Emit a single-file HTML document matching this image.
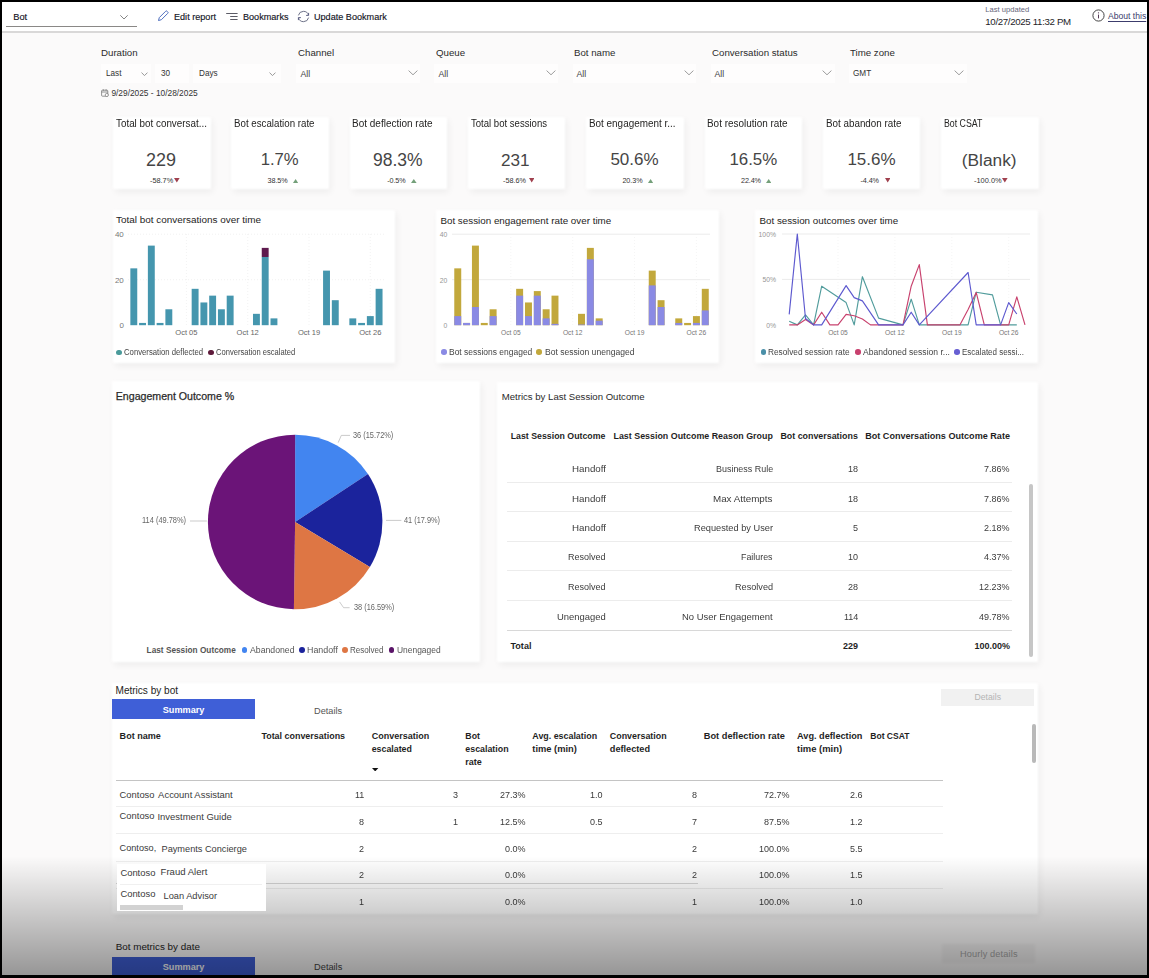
<!DOCTYPE html>
<html>
<head>
<meta charset="utf-8">
<title>Bot dashboard</title>
<style>
*{box-sizing:border-box;margin:0;padding:0}
html,body{width:1149px;height:978px;overflow:hidden;background:#000}
body{font-family:"Liberation Sans",sans-serif;color:#252423;position:relative}
.a{position:absolute;white-space:nowrap}
#page{position:absolute;left:0;top:0;width:1149px;height:978px;background:#fbfafa;overflow:hidden}
#hdr{position:absolute;left:0;top:0;width:1149px;height:31px;background:#fff}
#hdrline{position:absolute;left:0;top:31px;width:1149px;height:2px;background:#d9d8d8}
.ht{font-size:9.1px;color:#15151f;top:10.7px;-webkit-text-stroke:0.15px #15151f;line-height:12px}
.fl{font-size:9.7px;color:#2b2b2b;line-height:12px;top:47px}
.fv{font-size:8.2px;color:#333;line-height:10px;top:68.6px}
.fbox{position:absolute;top:64px;height:18.5px;background:#fefdfd;filter:blur(0.7px)}
.card{position:absolute;background:#fff;box-shadow:1.5px 3px 7px rgba(0,0,0,.06);filter:blur(1.1px)}
.kt{font-size:9.8px;color:#252423;line-height:12px;top:118px}
.kv{font-size:18.5px;color:#333;line-height:22px;top:148px;text-align:center;width:98px}
.ks{font-size:7.5px;color:#333;line-height:9px;top:176px;text-align:center;width:98px}
.ct{font-size:10px;color:#252423;line-height:12px}
.ax{font-size:7.5px;fill:#777;font-family:"Liberation Sans",sans-serif}
.lg{font-size:8px;color:#444;line-height:10px}
</style>
</head>
<body>
<div id="page">
<!-- HEADER -->
<div id="hdr"></div>
<div id="hdrline"></div>
<div class="a ht" style="left:13.2px;font-size:9.3px">Bot</div>
<div class="a" style="left:6px;top:26px;width:131px;height:1px;background:#8a8886"></div>
<svg class="a" style="left:118.6px;top:13.6px" width="10" height="7" viewBox="0 0 10 7"><path d="M1.3 1.3 L5 5 L8.7 1.3" fill="none" stroke="#777" stroke-width="0.9"/></svg>
<svg class="a" style="left:157px;top:10px" width="12" height="12" viewBox="0 0 12 12"><path d="M1.5 10.5 L2.3 7.6 L8.6 1.3 a1 1 0 0 1 1.5 0 l.6 .6 a1 1 0 0 1 0 1.5 L4.4 9.7 Z" fill="none" stroke="#3b5fb8" stroke-width="0.9"/></svg>
<div class="a ht" style="left:174px">Edit report</div>
<svg class="a" style="left:226.4px;top:12px" width="12" height="9" viewBox="0 0 12 9"><path d="M0.2 1.5H11.6M4.2 4.5H11.6M4.2 7.5H11.6" stroke="#4a4a55" stroke-width="0.9"/></svg>
<div class="a ht" style="left:243px">Bookmarks</div>
<svg class="a" style="left:296.9px;top:9.9px" width="13" height="13" viewBox="0 0 13 13"><path d="M1.4 5.4 A5.2 5.2 0 0 1 11.5 5.2 M11.6 7.6 A5.2 5.2 0 0 1 1.5 7.8" fill="none" stroke="#666a82" stroke-width="0.95"/><path d="M11.6 2.9 V5.4 H9.1 M1.4 10.1 V7.6 H3.9" fill="none" stroke="#565a80" stroke-width="0.95"/></svg>
<div class="a ht" style="left:314px">Update Bookmark</div>
<div class="a" style="left:985.3px;top:5px;font-size:7.6px;line-height:10px;color:#66667a;">Last updated</div>
<div class="a" style="left:985.3px;top:15.3px;font-size:9.69px;line-height:13px;color:#1d1d28;letter-spacing:-0.33px;">10/27/2025 11:32 PM</div>
<svg class="a" style="left:1091.6px;top:9.2px" width="13" height="13" viewBox="0 0 13 13"><circle cx="6.5" cy="6.5" r="5.6" fill="none" stroke="#3a3a3a" stroke-width="0.95"/><path d="M6.5 5.6V9.4" stroke="#553a55" stroke-width="1"/><circle cx="6.5" cy="3.8" r="0.65" fill="#553a55"/></svg>
<div class="a" style="left:1108px;top:11px;font-size:8.6px;color:#3c3c6c;line-height:11px;text-decoration:underline;text-underline-offset:1.5px">About this</div>

<!-- FILTERS -->
<div class="a fl" style="left:101px">Duration</div>
<div class="a fl" style="left:298px">Channel</div>
<div class="a fl" style="left:436px">Queue</div>
<div class="a fl" style="left:574px">Bot name</div>
<div class="a fl" style="left:712px">Conversation status</div>
<div class="a fl" style="left:850px">Time zone</div>
<div class="fbox" style="left:101px;width:50px"></div>
<div class="fbox" style="left:155px;width:34px"></div>
<div class="fbox" style="left:193px;width:88px"></div>
<div class="fbox" style="left:296px;width:124px"></div>
<div class="fbox" style="left:434px;width:124px"></div>
<div class="fbox" style="left:572.5px;width:123px"></div>
<div class="fbox" style="left:711px;width:124px"></div>
<div class="fbox" style="left:849px;width:117.5px"></div>
<div class="a fv" style="left:106px">Last</div>
<div class="a fv" style="left:161px">30</div>
<div class="a fv" style="left:199px">Days</div>
<div class="a fv" style="left:300.5px;font-size:8.7px;top:68.8px;color:#444">All</div>
<div class="a fv" style="left:438.5px;font-size:8.7px;top:68.8px;color:#444">All</div>
<div class="a fv" style="left:576.5px;font-size:8.7px;top:68.8px;color:#444">All</div>
<div class="a fv" style="left:714.5px;font-size:8.7px;top:68.8px;color:#444">All</div>
<div class="a fv" style="left:853px">GMT</div>
<div class="a" style="left:111.4px;top:88px;font-size:8.35px;color:#333;line-height:10px">9/29/2025 - 10/28/2025</div>
<svg class="a" style="left:101px;top:88.5px" width="8" height="8" viewBox="0 0 8 8"><rect x="0.6" y="1.2" width="6.2" height="6" rx="0.8" fill="none" stroke="#777" stroke-width="0.8"/><path d="M0.6 3H6.8M2.3 0.3V1.8M5.1 0.3V1.8" stroke="#777" stroke-width="0.8"/><circle cx="5.8" cy="6" r="1.6" fill="#fbfafa" stroke="#777" stroke-width="0.7"/></svg>
<svg class="a" style="left:140.7px;top:71.7px" width="7" height="4.2" viewBox="0 0 7 4.2"><path d="M0.5 0.6 L3.5 3.6 L6.5 0.6" fill="none" stroke="#858585" stroke-width="0.85"/></svg>
<svg class="a" style="left:268.5px;top:71.7px" width="7" height="4.2" viewBox="0 0 7 4.2"><path d="M0.5 0.6 L3.5 3.6 L6.5 0.6" fill="none" stroke="#858585" stroke-width="0.85"/></svg>
<svg class="a" style="left:407.7px;top:70px" width="10" height="5.6" viewBox="0 0 10 5.6"><path d="M0.6 0.6 L5 4.8 L9.4 0.6" fill="none" stroke="#8a8a8a" stroke-width="0.85"/></svg>
<svg class="a" style="left:545.6px;top:70px" width="10" height="5.6" viewBox="0 0 10 5.6"><path d="M0.6 0.6 L5 4.8 L9.4 0.6" fill="none" stroke="#8a8a8a" stroke-width="0.85"/></svg>
<svg class="a" style="left:683.8px;top:70px" width="10" height="5.6" viewBox="0 0 10 5.6"><path d="M0.6 0.6 L5 4.8 L9.4 0.6" fill="none" stroke="#8a8a8a" stroke-width="0.85"/></svg>
<svg class="a" style="left:821.8px;top:70px" width="10" height="5.6" viewBox="0 0 10 5.6"><path d="M0.6 0.6 L5 4.8 L9.4 0.6" fill="none" stroke="#8a8a8a" stroke-width="0.85"/></svg>
<svg class="a" style="left:953.8px;top:70px" width="10" height="5.6" viewBox="0 0 10 5.6"><path d="M0.6 0.6 L5 4.8 L9.4 0.6" fill="none" stroke="#8a8a8a" stroke-width="0.85"/></svg>
<!--CHEVRONS-->
<div class="card" style="left:113.2px;top:117px;width:97.5px;height:72px"></div>
<div class="a" style="left:115.7px;top:117.3px;font-size:10px;line-height:13px;color:#252423;transform:scaleX(0.985);transform-origin:0 50%;">Total bot conversat...</div>
<div class="a" style="left:146.0px;top:148.6px;font-size:17.98px;line-height:22px;color:#454545;letter-spacing:0.01px;">229</div>
<div class="a" style="left:150.0px;top:175.8px;font-size:7.33px;line-height:10px;color:#333;letter-spacing:-0.01px;">-58.7%</div>
<svg class="a" style="left:174.4px;top:178.4px" width="5.6" height="4.6"><polygon points="0,0 5.599999999999994,0 2.799999999999997,4.599999999999994" fill="#a0404e"/></svg>
<div class="card" style="left:231.4px;top:117px;width:97.5px;height:72px"></div>
<div class="a" style="left:234.2px;top:117.3px;font-size:10px;line-height:13px;color:#252423;transform:scaleX(0.972);transform-origin:0 50%;">Bot escalation rate</div>
<div class="a" style="left:260.8px;top:148.6px;font-size:16.72px;line-height:22px;color:#454545;letter-spacing:-0.09px;">1.7%</div>
<div class="a" style="left:267.6px;top:175.8px;font-size:7.22px;line-height:10px;color:#333;letter-spacing:-0.12px;">38.5%</div>
<svg class="a" style="left:293.2px;top:179.0px" width="5.2" height="4.0"><polygon points="0,4 2.5999999999999943,0 5.199999999999989,4" fill="#74a07a"/></svg>
<div class="card" style="left:349.7px;top:117px;width:97.5px;height:72px"></div>
<div class="a" style="left:352.4px;top:117.3px;font-size:10px;line-height:13px;color:#252423;transform:scaleX(0.999);transform-origin:0 50%;">Bot deflection rate</div>
<div class="a" style="left:373.0px;top:148.6px;font-size:17.5px;line-height:22px;color:#454545;letter-spacing:-0.01px;">98.3%</div>
<div class="a" style="left:387.2px;top:175.8px;font-size:7.22px;line-height:10px;color:#333;letter-spacing:-0.11px;">-0.5%</div>
<svg class="a" style="left:411.2px;top:179.0px" width="5.6" height="4.0"><polygon points="0,4 2.8000000000000114,0 5.600000000000023,4" fill="#74a07a"/></svg>
<div class="card" style="left:467.9px;top:117px;width:97.5px;height:72px"></div>
<div class="a" style="left:471.0px;top:117.3px;font-size:10px;line-height:13px;color:#252423;transform:scaleX(0.956);transform-origin:0 50%;">Total bot sessions</div>
<div class="a" style="left:501.0px;top:148.6px;font-size:17.14px;line-height:22px;color:#454545;letter-spacing:0.01px;">231</div>
<div class="a" style="left:503.0px;top:175.8px;font-size:7.26px;line-height:10px;color:#333;">-58.6%</div>
<svg class="a" style="left:529.0px;top:178.4px" width="5.4" height="4.6"><polygon points="0,0 5.399999999999977,0 2.6999999999999886,4.599999999999994" fill="#a0404e"/></svg>
<div class="card" style="left:586.2px;top:117px;width:97.5px;height:72px"></div>
<div class="a" style="left:588.6px;top:117.3px;font-size:10px;line-height:13px;color:#252423;transform:scaleX(0.990);transform-origin:0 50%;">Bot engagement r...</div>
<div class="a" style="left:610.4px;top:148.6px;font-size:17.0px;line-height:22px;color:#454545;">50.6%</div>
<div class="a" style="left:622.4px;top:175.8px;font-size:7.22px;line-height:10px;color:#333;letter-spacing:-0.07px;">20.3%</div>
<svg class="a" style="left:648.2px;top:179.0px" width="5.2" height="4.0"><polygon points="0,4 2.599999999999966,0 5.199999999999932,4" fill="#74a07a"/></svg>
<div class="card" style="left:704.5px;top:117px;width:97.5px;height:72px"></div>
<div class="a" style="left:707.0px;top:117.3px;font-size:10px;line-height:13px;color:#252423;transform:scaleX(0.993);transform-origin:0 50%;">Bot resolution rate</div>
<div class="a" style="left:729.4px;top:148.6px;font-size:16.86px;line-height:22px;color:#454545;">16.5%</div>
<div class="a" style="left:741.0px;top:175.8px;font-size:7.22px;line-height:10px;color:#333;letter-spacing:-0.12px;">22.4%</div>
<svg class="a" style="left:766.0px;top:179.0px" width="5.4" height="4.0"><polygon points="0,4 2.6999999999999886,0 5.399999999999977,4" fill="#74a07a"/></svg>
<div class="card" style="left:822.7px;top:117px;width:97.5px;height:72px"></div>
<div class="a" style="left:825.6px;top:117.3px;font-size:10px;line-height:13px;color:#252423;transform:scaleX(0.983);transform-origin:0 50%;">Bot abandon rate</div>
<div class="a" style="left:847.4px;top:148.6px;font-size:17.0px;line-height:22px;color:#454545;">15.6%</div>
<div class="a" style="left:860.4px;top:175.8px;font-size:7.22px;line-height:10px;color:#333;letter-spacing:-0.06px;">-4.4%</div>
<svg class="a" style="left:884.6px;top:178.4px" width="5.4" height="4.6"><polygon points="0,0 5.399999999999977,0 2.6999999999999886,4.599999999999994" fill="#a0404e"/></svg>
<div class="card" style="left:941.0px;top:117px;width:97.5px;height:72px"></div>
<div class="a" style="left:943.6px;top:117.3px;font-size:10px;line-height:13px;color:#252423;transform:scaleX(0.878);transform-origin:0 50%;">Bot CSAT</div>
<div class="a" style="left:961.8px;top:148.6px;font-size:17.3px;line-height:22px;color:#454545;letter-spacing:0.01px;">(Blank)</div>
<div class="a" style="left:974.0px;top:175.8px;font-size:7.41px;line-height:10px;color:#333;">-100.0%</div>
<svg class="a" style="left:1002.4px;top:178.4px" width="5.6" height="4.6"><polygon points="0,0 5.600000000000023,0 2.8000000000000114,4.599999999999994" fill="#a0404e"/></svg>
<!--KPI-->
<div class="card" style="left:113px;top:210px;width:282px;height:153px"></div>
<div class="card" style="left:436px;top:210px;width:283px;height:153px"></div>
<div class="card" style="left:755px;top:210px;width:283px;height:153px"></div>
<div class="a" style="left:116.0px;top:213.3px;font-size:9.94px;line-height:13px;color:#252423;">Total bot conversations over time</div>
<div class="a" style="left:115.1px;top:229.2px;font-size:7.98px;line-height:11px;color:#777;letter-spacing:-0.38px;">40</div>
<div class="a" style="left:115.1px;top:274.7px;font-size:7.98px;line-height:11px;color:#777;letter-spacing:-0.38px;">20</div>
<div class="a" style="left:119.4px;top:320.2px;font-size:7.98px;line-height:11px;color:#777;letter-spacing:-0.24px;">0</div>
<svg class="a" style="left:0;top:200px" width="1149" height="170" viewBox="0 200 1149 170"><line x1="128" x2="384" y1="279.7" y2="279.7" stroke="#ebebeb" stroke-width="0.7" stroke-dasharray="1 2"/><line x1="128" x2="384" y1="234.2" y2="234.2" stroke="#ebebeb" stroke-width="0.7" stroke-dasharray="1 2"/><line x1="186.4" x2="186.4" y1="234" y2="325.2" stroke="#eeeeee" stroke-width="0.7" stroke-dasharray="1 2"/><line x1="247.7" x2="247.7" y1="234" y2="325.2" stroke="#eeeeee" stroke-width="0.7" stroke-dasharray="1 2"/><line x1="309.0" x2="309.0" y1="234" y2="325.2" stroke="#eeeeee" stroke-width="0.7" stroke-dasharray="1 2"/><line x1="370.3" x2="370.3" y1="234" y2="325.2" stroke="#eeeeee" stroke-width="0.7" stroke-dasharray="1 2"/><rect x="130.35" y="268.35" width="6.9" height="56.85" fill="#4596ae"/><rect x="139.11" y="322.93" width="6.9" height="2.27" fill="#4596ae"/><rect x="147.87" y="245.61" width="6.9" height="79.59" fill="#4596ae"/><rect x="156.63" y="322.93" width="6.9" height="2.27" fill="#4596ae"/><rect x="165.39" y="309.28" width="6.9" height="15.92" fill="#4596ae"/><rect x="191.67" y="288.82" width="6.9" height="36.38" fill="#4596ae"/><rect x="200.43" y="302.46" width="6.9" height="22.74" fill="#4596ae"/><rect x="209.19" y="295.64" width="6.9" height="29.56" fill="#4596ae"/><rect x="217.95" y="309.28" width="6.9" height="15.92" fill="#4596ae"/><rect x="226.71" y="295.64" width="6.9" height="29.56" fill="#4596ae"/><rect x="252.99" y="313.83" width="6.9" height="11.37" fill="#4596ae"/><rect x="261.75" y="256.98" width="6.9" height="68.22" fill="#4596ae"/><rect x="261.75" y="247.88" width="6.9" height="9.10" fill="#5e1a4e"/><rect x="270.51" y="318.38" width="6.9" height="6.82" fill="#4596ae"/><rect x="323.07" y="270.62" width="6.9" height="54.58" fill="#4596ae"/><rect x="331.83" y="300.19" width="6.9" height="25.01" fill="#4596ae"/><rect x="349.35" y="318.38" width="6.9" height="6.82" fill="#4596ae"/><rect x="358.11" y="322.93" width="6.9" height="2.27" fill="#4596ae"/><rect x="366.87" y="316.10" width="6.9" height="9.10" fill="#4596ae"/><rect x="375.63" y="288.82" width="6.9" height="36.38" fill="#4596ae"/><line x1="452" x2="710" y1="279.7" y2="279.7" stroke="#e6e6e6" stroke-width="0.8"/><line x1="452" x2="710" y1="234.2" y2="234.2" stroke="#e6e6e6" stroke-width="0.8"/><line x1="510.8" x2="510.8" y1="234" y2="325.2" stroke="#f1f1f1" stroke-width="0.7" stroke-dasharray="1 2"/><line x1="572.7" x2="572.7" y1="234" y2="325.2" stroke="#f1f1f1" stroke-width="0.7" stroke-dasharray="1 2"/><line x1="634.5" x2="634.5" y1="234" y2="325.2" stroke="#f1f1f1" stroke-width="0.7" stroke-dasharray="1 2"/><line x1="696.4" x2="696.4" y1="234" y2="325.2" stroke="#f1f1f1" stroke-width="0.7" stroke-dasharray="1 2"/><rect x="454.27" y="268.35" width="6.96" height="56.85" fill="#c2a83c"/><rect x="454.27" y="316.10" width="6.96" height="9.10" fill="#8a8ae4"/><rect x="463.11" y="322.93" width="6.96" height="2.27" fill="#c2a83c"/><rect x="463.11" y="322.93" width="6.96" height="2.27" fill="#8a8ae4"/><rect x="471.95" y="245.61" width="6.96" height="79.59" fill="#c2a83c"/><rect x="471.95" y="307.01" width="6.96" height="18.19" fill="#8a8ae4"/><rect x="480.79" y="322.93" width="6.96" height="2.27" fill="#c2a83c"/><rect x="489.63" y="309.28" width="6.96" height="15.92" fill="#c2a83c"/><rect x="489.63" y="316.10" width="6.96" height="9.10" fill="#8a8ae4"/><rect x="516.15" y="288.82" width="6.96" height="36.38" fill="#c2a83c"/><rect x="516.15" y="295.64" width="6.96" height="29.56" fill="#8a8ae4"/><rect x="524.99" y="302.46" width="6.96" height="22.74" fill="#c2a83c"/><rect x="524.99" y="316.10" width="6.96" height="9.10" fill="#8a8ae4"/><rect x="533.83" y="291.09" width="6.96" height="34.11" fill="#c2a83c"/><rect x="533.83" y="295.64" width="6.96" height="29.56" fill="#8a8ae4"/><rect x="542.67" y="309.28" width="6.96" height="15.92" fill="#c2a83c"/><rect x="542.67" y="318.38" width="6.96" height="6.82" fill="#8a8ae4"/><rect x="551.51" y="295.64" width="6.96" height="29.56" fill="#c2a83c"/><rect x="551.51" y="323.84" width="6.96" height="1.36" fill="#8a8ae4"/><rect x="578.03" y="313.83" width="6.96" height="11.37" fill="#c2a83c"/><rect x="578.03" y="324.52" width="6.96" height="0.68" fill="#8a8ae4"/><rect x="586.87" y="247.88" width="6.96" height="77.32" fill="#c2a83c"/><rect x="586.87" y="259.25" width="6.96" height="65.95" fill="#8a8ae4"/><rect x="595.71" y="318.38" width="6.96" height="6.82" fill="#c2a83c"/><rect x="595.71" y="320.65" width="6.96" height="4.55" fill="#8a8ae4"/><rect x="648.75" y="270.62" width="6.96" height="54.58" fill="#c2a83c"/><rect x="648.75" y="285.40" width="6.96" height="39.80" fill="#8a8ae4"/><rect x="657.59" y="300.19" width="6.96" height="25.01" fill="#c2a83c"/><rect x="657.59" y="307.01" width="6.96" height="18.19" fill="#8a8ae4"/><rect x="675.27" y="318.38" width="6.96" height="6.82" fill="#c2a83c"/><rect x="675.27" y="322.93" width="6.96" height="2.27" fill="#8a8ae4"/><rect x="684.11" y="322.93" width="6.96" height="2.27" fill="#c2a83c"/><rect x="692.95" y="316.10" width="6.96" height="9.10" fill="#c2a83c"/><rect x="692.95" y="322.93" width="6.96" height="2.27" fill="#8a8ae4"/><rect x="701.79" y="288.82" width="6.96" height="36.38" fill="#c2a83c"/><rect x="701.79" y="310.42" width="6.96" height="14.78" fill="#8a8ae4"/><line x1="782" x2="1030" y1="279.4" y2="279.4" stroke="#e6e6e6" stroke-width="0.8"/><line x1="782" x2="1030" y1="234.0" y2="234.0" stroke="#e6e6e6" stroke-width="0.8"/><line x1="838.0" x2="838.0" y1="234" y2="324.9" stroke="#f1f1f1" stroke-width="0.7" stroke-dasharray="1 2"/><line x1="894.9" x2="894.9" y1="234" y2="324.9" stroke="#f1f1f1" stroke-width="0.7" stroke-dasharray="1 2"/><line x1="951.8" x2="951.8" y1="234" y2="324.9" stroke="#f1f1f1" stroke-width="0.7" stroke-dasharray="1 2"/><line x1="1008.7" x2="1008.7" y1="234" y2="324.9" stroke="#f1f1f1" stroke-width="0.7" stroke-dasharray="1 2"/><polyline points="789.2,321.3 797.3,324.9 805.5,314.9 813.6,324.9 821.7,286.2 846.1,302.6 854.2,324.9 862.4,276.7 878.6,318.1 903.0,324.9 911.2,299.2 919.3,324.9 968.1,324.9 976.2,292.2 992.5,294.9 1000.6,324.9 1016.8,324.9" fill="none" stroke="#519c9c" stroke-width="1.15" stroke-linejoin="round"/><polyline points="789.2,324.9 797.3,324.9 805.5,319.4 813.6,324.9 821.7,312.2 829.9,324.9 838.0,324.9 846.1,314.4 854.2,315.8 862.4,319.0 870.5,324.9 903.0,324.9 911.2,286.2 919.3,264.6 927.4,324.9 959.9,324.9 968.1,309.4 976.2,292.4 984.3,324.9 1008.7,324.9 1016.8,296.9 1025.0,324.9" fill="none" stroke="#c8426e" stroke-width="1.15" stroke-linejoin="round"/><polyline points="789.2,314.4 797.3,234.0 805.5,318.5 813.6,324.9 821.7,324.9 846.1,285.6 854.2,297.6 862.4,300.9 878.6,324.9 903.0,324.9 911.2,312.2 919.3,324.9 968.1,272.5 976.2,324.9 1000.6,324.9 1008.7,302.6 1016.8,314.0" fill="none" stroke="#5d59cf" stroke-width="1.15" stroke-linejoin="round"/></svg>
<div class="a" style="left:175.3px;top:328.0px;font-size:7.54px;line-height:10px;color:#666;">Oct 05</div>
<div class="a" style="left:236.6px;top:328.0px;font-size:7.54px;line-height:10px;color:#666;">Oct 12</div>
<div class="a" style="left:297.9px;top:328.0px;font-size:7.54px;line-height:10px;color:#666;">Oct 19</div>
<div class="a" style="left:359.2px;top:328.0px;font-size:7.54px;line-height:10px;color:#666;">Oct 26</div>
<div class="a" style="left:116.2px;top:349.5px;width:5.6px;height:5.6px;border-radius:50%;background:#4a9a9a"></div>
<div class="a" style="left:123.9px;top:346.8px;font-size:8.4px;line-height:11px;color:#444;transform:scaleX(0.923);transform-origin:0 50%;">Conversation deflected</div>
<div class="a" style="left:208.2px;top:349.5px;width:5.6px;height:5.6px;border-radius:50%;background:#5e1a3a"></div>
<div class="a" style="left:215.5px;top:346.8px;font-size:8.4px;line-height:11px;color:#444;transform:scaleX(0.905);transform-origin:0 50%;">Conversation escalated</div>
<div class="a" style="left:440.4px;top:213.8px;font-size:9.81px;line-height:13px;color:#252423;letter-spacing:0.01px;">Bot session engagement rate over time</div>
<div class="a" style="left:439.8px;top:230.1px;font-size:6.8px;line-height:9px;color:#969696;">40</div>
<div class="a" style="left:439.8px;top:275.6px;font-size:6.8px;line-height:9px;color:#969696;">20</div>
<div class="a" style="left:443.6px;top:321.1px;font-size:6.8px;line-height:9px;color:#969696;">0</div>
<div class="a" style="left:501.0px;top:328.1px;font-size:6.66px;line-height:9px;color:#777;">Oct 05</div>
<div class="a" style="left:562.9px;top:328.1px;font-size:6.66px;line-height:9px;color:#777;">Oct 12</div>
<div class="a" style="left:624.8px;top:328.1px;font-size:6.66px;line-height:9px;color:#777;">Oct 19</div>
<div class="a" style="left:686.6px;top:328.1px;font-size:6.66px;line-height:9px;color:#777;">Oct 26</div>
<div class="a" style="left:441.2px;top:349.4px;width:5.6px;height:5.6px;border-radius:50%;background:#8a8ae4"></div>
<div class="a" style="left:448.7px;top:346.7px;font-size:8.4px;line-height:11px;color:#444;transform:scaleX(1.011);transform-origin:0 50%;">Bot sessions engaged</div>
<div class="a" style="left:536.4px;top:349.4px;width:5.6px;height:5.6px;border-radius:50%;background:#c2a83c"></div>
<div class="a" style="left:544.5px;top:346.7px;font-size:8.4px;line-height:11px;color:#444;transform:scaleX(1.022);transform-origin:0 50%;">Bot session unengaged</div>
<div class="a" style="left:759.5px;top:213.8px;font-size:9.79px;line-height:13px;color:#252423;">Bot session outcomes over time</div>
<div class="a" style="left:758.6px;top:229.9px;font-size:6.8px;line-height:9px;color:#969696;">100%</div>
<div class="a" style="left:762.4px;top:275.3px;font-size:6.8px;line-height:9px;color:#969696;">50%</div>
<div class="a" style="left:766.2px;top:320.8px;font-size:6.8px;line-height:9px;color:#969696;">0%</div>
<div class="a" style="left:828.2px;top:328.1px;font-size:6.66px;line-height:9px;color:#777;">Oct 05</div>
<div class="a" style="left:885.1px;top:328.1px;font-size:6.66px;line-height:9px;color:#777;">Oct 12</div>
<div class="a" style="left:942.0px;top:328.1px;font-size:6.66px;line-height:9px;color:#777;">Oct 19</div>
<div class="a" style="left:998.9px;top:328.1px;font-size:6.66px;line-height:9px;color:#777;">Oct 26</div>
<div class="a" style="left:760.9px;top:349.4px;width:5.6px;height:5.6px;border-radius:50%;background:#4a8fa8"></div>
<div class="a" style="left:768.4px;top:346.7px;font-size:8.4px;line-height:11px;color:#444;transform:scaleX(0.990);transform-origin:0 50%;">Resolved session rate</div>
<div class="a" style="left:855.0px;top:349.4px;width:5.6px;height:5.6px;border-radius:50%;background:#c8406e"></div>
<div class="a" style="left:862.6px;top:346.7px;font-size:8.4px;line-height:11px;color:#444;transform:scaleX(1.020);transform-origin:0 50%;">Abandoned session r...</div>
<div class="a" style="left:954.0px;top:349.4px;width:5.6px;height:5.6px;border-radius:50%;background:#675fd2"></div>
<div class="a" style="left:962.0px;top:346.7px;font-size:8.4px;line-height:11px;color:#444;transform:scaleX(0.951);transform-origin:0 50%;">Escalated sessi...</div>
<!--CHARTS-->
<div class="card" style="left:112px;top:381px;width:368px;height:281px"></div>
<div class="a" style="left:115.8px;top:389.4px;font-size:10.61px;line-height:14px;color:#2b2b2b;letter-spacing:-0.01px;-webkit-text-stroke:0.25px #2b2b2b;">Engagement Outcome %</div>
<svg class="a" style="left:130px;top:425px" width="330" height="195" viewBox="130 425 330 195"><path d="M295.1 522.0 L295.10 434.70 A87.3 87.3 0 0 1 367.98 473.94 Z" fill="#4285f0"/><path d="M295.1 522.0 L367.98 473.94 A87.3 87.3 0 0 1 369.89 567.03 Z" fill="#1b239c"/><path d="M295.1 522.0 L369.89 567.03 A87.3 87.3 0 0 1 293.90 609.29 Z" fill="#de7644"/><path d="M295.1 522.0 L293.90 609.29 A87.3 87.3 0 0 1 295.10 434.70 Z" fill="#6b1478"/><polyline points="338.2,442.6 341.3,435.4 350,435.4" stroke="#b5b5b5" stroke-width="0.7" fill="none"/><polyline points="386,520.4 401.4,520.4" stroke="#b5b5b5" stroke-width="0.7" fill="none"/><polyline points="339.6,601.9 343.6,607.7 349.6,607.7" stroke="#b5b5b5" stroke-width="0.7" fill="none"/><polyline points="190,521 206.9,521" stroke="#b5b5b5" stroke-width="0.7" fill="none"/></svg>
<div class="a" style="left:352.7px;top:430.2px;font-size:8.2px;line-height:11px;color:#666;transform:scaleX(0.903);transform-origin:0 50%;">36 (15.72%)</div>
<div class="a" style="left:404.0px;top:514.9px;font-size:8.2px;line-height:11px;color:#666;transform:scaleX(0.899);transform-origin:0 50%;">41 (17.9%)</div>
<div class="a" style="left:353.7px;top:602.4px;font-size:8.2px;line-height:11px;color:#666;transform:scaleX(0.901);transform-origin:0 50%;">38 (16.59%)</div>
<div class="a" style="left:142.1px;top:515.4px;font-size:8.2px;line-height:11px;color:#666;transform:scaleX(0.908);transform-origin:0 50%;">114 (49.78%)</div>
<div class="a" style="left:146.6px;top:644.6px;font-size:8.26px;line-height:11px;color:#555;letter-spacing:0.01px;font-weight:700;">Last Session Outcome</div>
<div class="a" style="left:241.7px;top:647.1px;width:5.8px;height:5.8px;border-radius:50%;background:#4285f0"></div>
<div class="a" style="left:249.8px;top:644.6px;font-size:8.7px;line-height:11px;color:#555;transform:scaleX(1.001);transform-origin:0 50%;">Abandoned</div>
<div class="a" style="left:298.8px;top:647.1px;width:5.8px;height:5.8px;border-radius:50%;background:#1b239c"></div>
<div class="a" style="left:307.0px;top:644.6px;font-size:8.7px;line-height:11px;color:#555;transform:scaleX(1.020);transform-origin:0 50%;">Handoff</div>
<div class="a" style="left:342.2px;top:647.1px;width:5.8px;height:5.8px;border-radius:50%;background:#de7644"></div>
<div class="a" style="left:350.3px;top:644.6px;font-size:8.7px;line-height:11px;color:#555;transform:scaleX(0.925);transform-origin:0 50%;">Resolved</div>
<div class="a" style="left:388.6px;top:647.1px;width:5.8px;height:5.8px;border-radius:50%;background:#5a1468"></div>
<div class="a" style="left:397.2px;top:644.6px;font-size:8.7px;line-height:11px;color:#555;transform:scaleX(0.970);transform-origin:0 50%;">Unengaged</div>
<!--PIE-->
<div class="card" style="left:497px;top:382px;width:541px;height:280px"></div>
<div class="a" style="left:501.7px;top:390.1px;font-size:9.61px;line-height:13px;color:#2a2a2a;">Metrics by Last Session Outcome</div>
<div class="a" style="left:510.7px;top:430.0px;font-size:8.78px;line-height:12px;color:#1f1f1f;letter-spacing:0.01px;font-weight:700;">Last Session Outcome</div>
<div class="a" style="left:613.5px;top:430.0px;font-size:8.87px;line-height:12px;color:#1f1f1f;letter-spacing:0.01px;font-weight:700;">Last Session Outcome Reason Group</div>
<div class="a" style="left:780.4px;top:430.0px;font-size:8.88px;line-height:12px;color:#1f1f1f;font-weight:700;">Bot conversations</div>
<div class="a" style="left:865.2px;top:430.0px;font-size:9.08px;line-height:12px;color:#1f1f1f;font-weight:700;">Bot Conversations Outcome Rate</div>
<div class="a" style="left:571.6px;top:462.0px;font-size:9.8px;line-height:13px;color:#3c3c3c;transform:scaleX(0.996);transform-origin:0 50%;">Handoff</div>
<div class="a" style="left:715.6px;top:462.0px;font-size:9.8px;line-height:13px;color:#3c3c3c;transform:scaleX(0.912);transform-origin:0 50%;">Business Rule</div>
<div class="a" style="left:847.9px;top:462.0px;font-size:9.8px;line-height:13px;color:#3c3c3c;transform:scaleX(0.920);transform-origin:0 50%;">18</div>
<div class="a" style="left:984.4px;top:462.0px;font-size:9.8px;line-height:13px;color:#3c3c3c;transform:scaleX(0.920);transform-origin:0 50%;">7.86%</div>
<div class="a" style="left:571.6px;top:491.5px;font-size:9.8px;line-height:13px;color:#3c3c3c;transform:scaleX(0.996);transform-origin:0 50%;">Handoff</div>
<div class="a" style="left:713.3px;top:491.5px;font-size:9.8px;line-height:13px;color:#3c3c3c;transform:scaleX(1.001);transform-origin:0 50%;">Max Attempts</div>
<div class="a" style="left:847.9px;top:491.5px;font-size:9.8px;line-height:13px;color:#3c3c3c;transform:scaleX(0.920);transform-origin:0 50%;">18</div>
<div class="a" style="left:984.4px;top:491.5px;font-size:9.8px;line-height:13px;color:#3c3c3c;transform:scaleX(0.920);transform-origin:0 50%;">7.86%</div>
<div class="a" style="left:571.6px;top:520.5px;font-size:9.8px;line-height:13px;color:#3c3c3c;transform:scaleX(0.996);transform-origin:0 50%;">Handoff</div>
<div class="a" style="left:693.7px;top:520.5px;font-size:9.8px;line-height:13px;color:#3c3c3c;transform:scaleX(0.942);transform-origin:0 50%;">Requested by User</div>
<div class="a" style="left:852.9px;top:520.5px;font-size:9.8px;line-height:13px;color:#3c3c3c;transform:scaleX(0.920);transform-origin:0 50%;">5</div>
<div class="a" style="left:984.4px;top:520.5px;font-size:9.8px;line-height:13px;color:#3c3c3c;transform:scaleX(0.920);transform-origin:0 50%;">2.18%</div>
<div class="a" style="left:568.0px;top:550.1px;font-size:9.8px;line-height:13px;color:#3c3c3c;transform:scaleX(0.921);transform-origin:0 50%;">Resolved</div>
<div class="a" style="left:741.2px;top:550.1px;font-size:9.8px;line-height:13px;color:#3c3c3c;transform:scaleX(0.904);transform-origin:0 50%;">Failures</div>
<div class="a" style="left:847.9px;top:550.1px;font-size:9.8px;line-height:13px;color:#3c3c3c;transform:scaleX(0.920);transform-origin:0 50%;">10</div>
<div class="a" style="left:984.4px;top:550.1px;font-size:9.8px;line-height:13px;color:#3c3c3c;transform:scaleX(0.920);transform-origin:0 50%;">4.37%</div>
<div class="a" style="left:568.0px;top:579.7px;font-size:9.8px;line-height:13px;color:#3c3c3c;transform:scaleX(0.921);transform-origin:0 50%;">Resolved</div>
<div class="a" style="left:734.6px;top:579.7px;font-size:9.8px;line-height:13px;color:#3c3c3c;transform:scaleX(0.933);transform-origin:0 50%;">Resolved</div>
<div class="a" style="left:847.9px;top:579.7px;font-size:9.8px;line-height:13px;color:#3c3c3c;transform:scaleX(0.920);transform-origin:0 50%;">28</div>
<div class="a" style="left:979.4px;top:579.7px;font-size:9.8px;line-height:13px;color:#3c3c3c;transform:scaleX(0.920);transform-origin:0 50%;">12.23%</div>
<div class="a" style="left:556.8px;top:609.7px;font-size:9.8px;line-height:13px;color:#3c3c3c;transform:scaleX(0.963);transform-origin:0 50%;">Unengaged</div>
<div class="a" style="left:682.0px;top:609.7px;font-size:9.8px;line-height:13px;color:#3c3c3c;transform:scaleX(0.963);transform-origin:0 50%;">No User Engagement</div>
<div class="a" style="left:843.5px;top:609.7px;font-size:9.8px;line-height:13px;color:#3c3c3c;transform:scaleX(0.920);transform-origin:0 50%;">114</div>
<div class="a" style="left:979.4px;top:609.7px;font-size:9.8px;line-height:13px;color:#3c3c3c;transform:scaleX(0.920);transform-origin:0 50%;">49.78%</div>
<div class="a" style="left:507px;top:481.8px;width:504.5px;height:1px;background:#ececec"></div>
<div class="a" style="left:507px;top:511.2px;width:504.5px;height:1px;background:#ececec"></div>
<div class="a" style="left:507px;top:540.5px;width:504.5px;height:1px;background:#ececec"></div>
<div class="a" style="left:507px;top:570.3px;width:504.5px;height:1px;background:#ececec"></div>
<div class="a" style="left:507px;top:600.1px;width:504.5px;height:1px;background:#ececec"></div>
<div class="a" style="left:507px;top:629.5px;width:504.5px;height:1px;background:#d8d8d8"></div>
<div class="a" style="left:510.5px;top:639.6px;font-size:9.02px;line-height:12px;color:#1f1f1f;letter-spacing:0.01px;font-weight:700;">Total</div>
<div class="a" style="left:842.9px;top:639.6px;font-size:9.0px;line-height:12px;color:#1f1f1f;font-weight:700;">229</div>
<div class="a" style="left:974.5px;top:639.6px;font-size:9.0px;line-height:12px;color:#1f1f1f;font-weight:700;">100.00%</div>
<div class="a" style="left:1028.5px;top:484px;width:4px;height:173px;background:#c6c6c6;border-radius:2px"></div>
<!--TABLE1-->
<div class="card" style="left:112px;top:683px;width:926px;height:230.5px"></div>
<div class="a" style="left:115.5px;top:683.9px;font-size:10.08px;line-height:13px;color:#252423;letter-spacing:-0.01px;">Metrics by bot</div>
<div class="a" style="left:111.8px;top:699.1px;width:143.3px;height:20px;background:#3f5fd7"></div>
<div class="a" style="left:162.7px;top:704.4px;font-size:9.15px;line-height:12px;color:#fff;letter-spacing:0.02px;font-weight:700;">Summary</div>
<div class="a" style="left:314.0px;top:704.6px;font-size:9.2px;line-height:12px;color:#555;">Details</div>
<div class="a" style="left:940.8px;top:688.6px;width:93.2px;height:17px;background:#f1f1f1"></div>
<div class="a" style="left:974.5px;top:691.7px;font-size:8.67px;line-height:11px;color:#b4b4b4;letter-spacing:0.01px;">Details</div>
<div class="a" style="left:119.6px;top:729.8px;font-size:9.04px;line-height:12px;color:#1f1f1f;letter-spacing:0.01px;font-weight:700;">Bot name</div>
<div class="a" style="left:261.4px;top:729.8px;font-size:8.92px;line-height:12px;color:#1f1f1f;letter-spacing:0.01px;font-weight:700;">Total conversations</div>
<div class="a" style="left:371.7px;top:729.8px;font-size:9.0px;line-height:12px;color:#1f1f1f;font-weight:700;">Conversation</div>
<div class="a" style="left:371.7px;top:743.1px;font-size:8.82px;line-height:12px;color:#1f1f1f;font-weight:700;">escalated</div>
<svg class="a" style="left:372.2px;top:767.8px" width="6.4" height="3.4"><polygon points="0,0 6.4,0 3.2,3.4" fill="#111"/></svg>
<div class="a" style="left:465.3px;top:729.8px;font-size:8.76px;line-height:12px;color:#1f1f1f;letter-spacing:0.01px;font-weight:700;">Bot</div>
<div class="a" style="left:465.3px;top:743.1px;font-size:8.85px;line-height:12px;color:#1f1f1f;font-weight:700;">escalation</div>
<div class="a" style="left:465.3px;top:756.3px;font-size:8.99px;line-height:12px;color:#1f1f1f;letter-spacing:0.01px;font-weight:700;">rate</div>
<div class="a" style="left:532.3px;top:729.8px;font-size:8.88px;line-height:12px;color:#1f1f1f;font-weight:700;">Avg. escalation</div>
<div class="a" style="left:532.3px;top:743.1px;font-size:9.33px;line-height:12px;color:#1f1f1f;font-weight:700;">time (min)</div>
<div class="a" style="left:609.8px;top:729.8px;font-size:8.89px;line-height:12px;color:#1f1f1f;letter-spacing:0.01px;font-weight:700;">Conversation</div>
<div class="a" style="left:609.8px;top:743.1px;font-size:9.18px;line-height:12px;color:#1f1f1f;font-weight:700;">deflected</div>
<div class="a" style="left:703.8px;top:729.8px;font-size:9.24px;line-height:12px;color:#1f1f1f;font-weight:700;">Bot deflection rate</div>
<div class="a" style="left:797.0px;top:729.8px;font-size:9.17px;line-height:12px;color:#1f1f1f;letter-spacing:0.01px;font-weight:700;">Avg. deflection</div>
<div class="a" style="left:797.0px;top:743.1px;font-size:9.42px;line-height:12px;color:#1f1f1f;letter-spacing:0.01px;font-weight:700;">time (min)</div>
<div class="a" style="left:870.3px;top:729.8px;font-size:8.55px;line-height:12px;color:#1f1f1f;letter-spacing:-0.02px;font-weight:700;">Bot CSAT</div>
<div class="a" style="left:116.0px;top:779.9px;width:827.0px;height:1px;background:#c4c4c4;"></div>
<div class="a" style="left:354.8px;top:787.9px;font-size:9.8px;line-height:13px;color:#3a3a3a;transform:scaleX(0.920);transform-origin:0 50%;">11</div>
<div class="a" style="left:452.8px;top:787.9px;font-size:9.8px;line-height:13px;color:#3a3a3a;transform:scaleX(0.920);transform-origin:0 50%;">3</div>
<div class="a" style="left:499.6px;top:787.9px;font-size:9.8px;line-height:13px;color:#3a3a3a;transform:scaleX(0.920);transform-origin:0 50%;">27.3%</div>
<div class="a" style="left:590.3px;top:787.9px;font-size:9.8px;line-height:13px;color:#3a3a3a;transform:scaleX(0.920);transform-origin:0 50%;">1.0</div>
<div class="a" style="left:691.7px;top:787.9px;font-size:9.8px;line-height:13px;color:#3a3a3a;transform:scaleX(0.920);transform-origin:0 50%;">8</div>
<div class="a" style="left:764.4px;top:787.9px;font-size:9.8px;line-height:13px;color:#3a3a3a;transform:scaleX(0.920);transform-origin:0 50%;">72.7%</div>
<div class="a" style="left:850.3px;top:787.9px;font-size:9.8px;line-height:13px;color:#3a3a3a;transform:scaleX(0.920);transform-origin:0 50%;">2.6</div>
<div class="a" style="left:359.2px;top:814.8px;font-size:9.8px;line-height:13px;color:#3a3a3a;transform:scaleX(0.920);transform-origin:0 50%;">8</div>
<div class="a" style="left:452.8px;top:814.8px;font-size:9.8px;line-height:13px;color:#3a3a3a;transform:scaleX(0.920);transform-origin:0 50%;">1</div>
<div class="a" style="left:499.6px;top:814.8px;font-size:9.8px;line-height:13px;color:#3a3a3a;transform:scaleX(0.920);transform-origin:0 50%;">12.5%</div>
<div class="a" style="left:590.3px;top:814.8px;font-size:9.8px;line-height:13px;color:#3a3a3a;transform:scaleX(0.920);transform-origin:0 50%;">0.5</div>
<div class="a" style="left:691.7px;top:814.8px;font-size:9.8px;line-height:13px;color:#3a3a3a;transform:scaleX(0.920);transform-origin:0 50%;">7</div>
<div class="a" style="left:764.4px;top:814.8px;font-size:9.8px;line-height:13px;color:#3a3a3a;transform:scaleX(0.920);transform-origin:0 50%;">87.5%</div>
<div class="a" style="left:850.3px;top:814.8px;font-size:9.8px;line-height:13px;color:#3a3a3a;transform:scaleX(0.920);transform-origin:0 50%;">1.2</div>
<div class="a" style="left:359.2px;top:842.1px;font-size:9.8px;line-height:13px;color:#3a3a3a;transform:scaleX(0.920);transform-origin:0 50%;">2</div>
<div class="a" style="left:504.6px;top:842.1px;font-size:9.8px;line-height:13px;color:#3a3a3a;transform:scaleX(0.920);transform-origin:0 50%;">0.0%</div>
<div class="a" style="left:691.7px;top:842.1px;font-size:9.8px;line-height:13px;color:#3a3a3a;transform:scaleX(0.920);transform-origin:0 50%;">2</div>
<div class="a" style="left:759.4px;top:842.1px;font-size:9.8px;line-height:13px;color:#3a3a3a;transform:scaleX(0.920);transform-origin:0 50%;">100.0%</div>
<div class="a" style="left:850.3px;top:842.1px;font-size:9.8px;line-height:13px;color:#3a3a3a;transform:scaleX(0.920);transform-origin:0 50%;">5.5</div>
<div class="a" style="left:359.2px;top:868.3px;font-size:9.8px;line-height:13px;color:#3a3a3a;transform:scaleX(0.920);transform-origin:0 50%;">2</div>
<div class="a" style="left:504.6px;top:868.3px;font-size:9.8px;line-height:13px;color:#3a3a3a;transform:scaleX(0.920);transform-origin:0 50%;">0.0%</div>
<div class="a" style="left:691.7px;top:868.3px;font-size:9.8px;line-height:13px;color:#3a3a3a;transform:scaleX(0.920);transform-origin:0 50%;">2</div>
<div class="a" style="left:759.4px;top:868.3px;font-size:9.8px;line-height:13px;color:#3a3a3a;transform:scaleX(0.920);transform-origin:0 50%;">100.0%</div>
<div class="a" style="left:850.3px;top:868.3px;font-size:9.8px;line-height:13px;color:#3a3a3a;transform:scaleX(0.920);transform-origin:0 50%;">1.5</div>
<div class="a" style="left:359.2px;top:895.4px;font-size:9.8px;line-height:13px;color:#3a3a3a;transform:scaleX(0.920);transform-origin:0 50%;">1</div>
<div class="a" style="left:504.6px;top:895.4px;font-size:9.8px;line-height:13px;color:#3a3a3a;transform:scaleX(0.920);transform-origin:0 50%;">0.0%</div>
<div class="a" style="left:691.7px;top:895.4px;font-size:9.8px;line-height:13px;color:#3a3a3a;transform:scaleX(0.920);transform-origin:0 50%;">1</div>
<div class="a" style="left:759.4px;top:895.4px;font-size:9.8px;line-height:13px;color:#3a3a3a;transform:scaleX(0.920);transform-origin:0 50%;">100.0%</div>
<div class="a" style="left:850.3px;top:895.4px;font-size:9.8px;line-height:13px;color:#3a3a3a;transform:scaleX(0.920);transform-origin:0 50%;">1.0</div>
<div class="a" style="left:116.0px;top:806.1px;width:827.0px;height:1px;background:#eeeeee;"></div>
<div class="a" style="left:116.0px;top:833.1px;width:827.0px;height:1px;background:#eeeeee;"></div>
<div class="a" style="left:116.0px;top:860.5px;width:827.0px;height:1px;background:#eeeeee;"></div>
<div class="a" style="left:116.0px;top:882.9px;width:582.0px;height:1px;background:#d6d6d6;"></div>
<div class="a" style="left:116.0px;top:887.9px;width:827.0px;height:1px;background:#ececec;"></div>
<div class="a" style="left:119.6px;top:788.5px;font-size:9.39px;line-height:12px;color:#3a3a3a;">Contoso</div>
<div class="a" style="left:158.1px;top:788.9px;font-size:9.45px;line-height:12px;color:#3a3a3a;letter-spacing:0.01px;">Account Assistant</div>
<div class="a" style="left:119.6px;top:810.2px;font-size:9.39px;line-height:12px;color:#3a3a3a;">Contoso</div>
<div class="a" style="left:157.4px;top:810.6px;font-size:9.48px;line-height:12px;color:#3a3a3a;letter-spacing:0.01px;">Investment Guide</div>
<div class="a" style="left:119.6px;top:842.4px;font-size:9.17px;line-height:12px;color:#3a3a3a;letter-spacing:-0.01px;">Contoso,</div>
<div class="a" style="left:161.5px;top:842.8px;font-size:9.21px;line-height:12px;color:#3a3a3a;">Payments Concierge</div>
<div class="a" style="left:1032px;top:724px;width:4px;height:38.5px;background:#b9b9b9;border-radius:2px"></div>
<!--TABLE2-->
<div class="a" style="left:115.7px;top:940.3px;font-size:9.87px;line-height:13px;color:#252423;letter-spacing:-0.01px;">Bot metrics by date</div>
<div class="a" style="left:111.7px;top:956.7px;width:143.7px;height:20px;background:#3f5fd7"></div>
<div class="a" style="left:162.7px;top:961.0px;font-size:9.15px;line-height:12px;color:#fff;letter-spacing:0.02px;font-weight:700;">Summary</div>
<div class="a" style="left:314.1px;top:961.1px;font-size:9.23px;line-height:12px;color:#444;">Details</div>
<div class="a" style="left:941.5px;top:943.6px;width:93px;height:19px;background:#f2f1f1;filter:blur(0.8px)"></div>
<div class="a" style="left:960.0px;top:948.8px;font-size:9.2px;line-height:11px;color:#a4a4a4;letter-spacing:0.14px;">Hourly details</div>
<div class="a" style="left:0;top:856px;width:1149px;height:119px;background:linear-gradient(to bottom,rgba(0,0,0,0),rgba(0,0,0,0.40));z-index:10"></div>
<div class="a" style="left:117.2px;top:863.8px;width:148.6px;height:47px;background:#fff;z-index:20;"></div>
<div class="a" style="left:120.0px;top:883.7px;width:142.0px;height:1px;background:#f0f0f0;z-index:20;"></div>
<div class="a" style="left:120.4px;top:866.5px;font-size:9.42px;line-height:12px;color:#3a3a3a;letter-spacing:-0.01px;z-index:20;">Contoso</div>
<div class="a" style="left:160.6px;top:865.9px;font-size:9.55px;line-height:12px;color:#3a3a3a;z-index:20;">Fraud Alert</div>
<div class="a" style="left:120.4px;top:888.4px;font-size:9.42px;line-height:12px;color:#3a3a3a;letter-spacing:-0.01px;z-index:20;">Contoso</div>
<div class="a" style="left:163.5px;top:890.0px;font-size:9.27px;line-height:12px;color:#3a3a3a;z-index:20;">Loan Advisor</div>
<div class="a" style="left:120.1px;top:905.4px;width:63px;height:4.2px;background:#d2d2d2;z-index:20;"></div>
<!--BOTTOM-->
<div class="a" style="left:0;top:0;width:1149px;height:2px;background:#000;z-index:50"></div>
<div class="a" style="left:0;top:0;width:2px;height:978px;background:#000;z-index:50"></div>
<div class="a" style="left:1147px;top:0;width:2px;height:978px;background:#000;z-index:50"></div>
<div class="a" style="left:0;top:975px;width:1149px;height:3px;background:#000;z-index:50"></div>
</div>
</body>
</html>
